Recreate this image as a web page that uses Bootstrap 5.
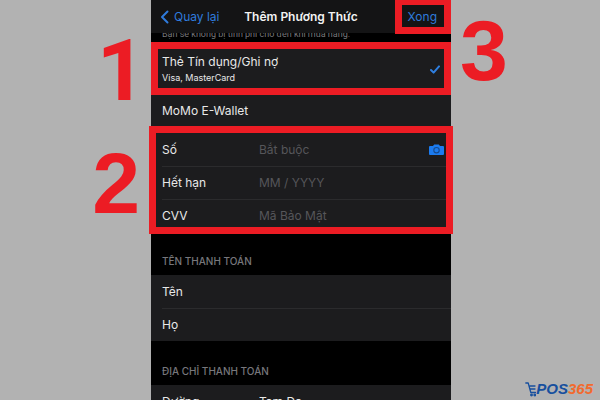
<!DOCTYPE html>
<html lang="vi">
<head>
<meta charset="utf-8">
<meta name="viewport" content="width=device-width, initial-scale=1">
<title>Thêm Phương Thức</title>
<link href="https://cdn.jsdelivr.net/npm/bootstrap@5.3.0/dist/css/bootstrap.min.css" rel="stylesheet">
<style>
body { background: #b2b2b2; font-family: Inter, "Noto Sans", sans-serif; font-size: 12px; line-height: 16px; color: #e8e8e8; }
.stage { display: grid; grid-template-columns: 151fr 300fr 149fr; grid-template-rows: 100vh; height: 100vh; }
.phone { background: #000; min-width: 0; }
.topbar { background: #141415; height: 33px; }
.topbar h1 { font-size: 12px; line-height: 16px; font-weight: 600; color: #f2f2f2; }
.side { flex: 1 1 0; }
.topbar a, .done { color: #2f7bdc; font-size: 12px; }
.topbar a { padding-left: 9px; gap: 4px; }
.done { margin-right: 14px; }
.notice { height: 9px; font: 9px/12px Roboto, "Noto Sans", sans-serif; color: #77777b; padding: 0 11px 2px; }
.cell { background: #1c1c1e; color: #e8e8e8; padding: 0 11px; min-height: 33px; }
.method { min-height: 53px; padding-top: 2px; }
.momo { height: 38px; padding-bottom: 7px; }
.method small { font-size: 9px; line-height: 16px; }
.cell + .cell > .line { border-top: 1px solid #2b2b2d; }
.line { height: 33px; margin-right: -11px; padding-right: 7px; }
.line label { flex: 0 0 97px; }
.line input { color: #e8e8e8; min-width: 0; padding: 0; line-height: 16px; height: 16px; }
.line input::placeholder { color: #56565a; opacity: 1; }
.caption { font-size: 10px; line-height: 14px; color: #77777c; padding: 0 11px 7px; }
.gap-a { height: 43px; }
.gap-b { height: 44px; }
.ring { position: absolute; border: 7px solid #ec1c24; pointer-events: none; z-index: 2; }
.ring-done { inset: 0 0 -1px auto; width: 56px; border-top-width: 5px; }
.ring-card { inset: -7px -2px -2px; }
.num { font: bold 86px/100px "Liberation Sans", Arial, sans-serif; color: #ec1c24; }
.num-one { font-family: Roboto, "Open Sans", sans-serif; }
.steps-l { padding: 21px 5px 0 0; }
.steps-l .num + .num { margin-top: 12px; padding-right: 6px; }
.steps-r { padding: 0 7px 2px 9px; }
.brand { font: italic bold 15px/18px "Liberation Sans", Arial, sans-serif; color: #174f9e; }
.brand b { color: #f26a2e; }
</style>
<script src="https://cdn.jsdelivr.net/npm/bootstrap@5.3.0/dist/js/bootstrap.bundle.min.js"></script>
</head>
<body class="overflow-hidden">
<div class="stage">
  <aside class="steps-l d-flex flex-column align-items-end">
    <div class="num num-one">1</div>
    <div class="num">2</div>
  </aside>

  <main class="phone">
    <header class="topbar position-relative d-flex align-items-center">
      <div class="side"><a href="#" class="d-flex align-items-center text-decoration-none">
        <svg width="10" height="14" viewBox="0 0 10 14" fill="none" stroke="currentColor" stroke-width="2" stroke-linecap="round" stroke-linejoin="round" aria-hidden="true"><path d="M7.500 1.500 2 7l5.500 5.500"/></svg>Quay lại</a></div>
      <h1 class="m-0 text-nowrap">Thêm Phương Thức</h1>
      <div class="side text-end"><button type="button" class="done btn border-0 p-0">Xong</button></div>
      <span class="ring ring-done"></span>
    </header>
    <p class="notice d-flex align-items-end overflow-hidden text-nowrap m-0">Bạn sẽ không bị tính phí cho đến khi mua hàng.</p>

    <button type="button" class="cell method position-relative border-0 w-100 d-flex align-items-center justify-content-between text-start">
      <span><span class="d-block">Thẻ Tín dụng/Ghi nợ</span><small class="d-block">Visa, MasterCard</small></span>
      <svg width="10" height="9" viewBox="0 0 10 9" fill="none" stroke="#2f7fe0" stroke-width="2" stroke-linecap="round" stroke-linejoin="round" aria-hidden="true"><path d="M1 5l2.600 2.600L9 1.400"/></svg>
      <span class="ring top-0 bottom-0 start-0 end-0"></span>
    </button>
    <button type="button" class="cell momo border-0 w-100 d-flex align-items-center">MoMo E-Wallet</button>

    <section class="position-relative">
      <div class="cell"><div class="line d-flex align-items-center">
        <label for="so">Số</label><input id="so" class="bg-transparent border-0 flex-grow-1" placeholder="Bắt buộc">
        <svg class="flex-shrink-0" width="15" height="12" viewBox="0 0 15 12" aria-hidden="true"><path fill="#1b7bf0" d="M1 2h3l1.200-1.600h4.600L11 2h3Q15 2 15 3v7Q15 11 14 11H1Q0 11 0 10V3Q0 2 1 2z"/><circle cx="7.500" cy="6.200" r="2.700" fill="none" stroke="#174a8c" stroke-width="1.100"/></svg>
      </div></div>
      <div class="cell"><div class="line d-flex align-items-center">
        <label for="han">Hết hạn</label><input id="han" class="bg-transparent border-0 flex-grow-1" placeholder="MM / YYYY"></div></div>
      <div class="cell"><div class="line d-flex align-items-center">
        <label for="cvv">CVV</label><input id="cvv" class="bg-transparent border-0 flex-grow-1" placeholder="Mã Bảo Mật"></div></div>
      <span class="ring ring-card"></span>
    </section>

    <h2 class="caption gap-a d-flex align-items-end m-0">TÊN THANH TOÁN</h2>
    <section>
      <div class="cell"><div class="line d-flex align-items-center">
        <label for="ten">Tên</label><input id="ten" class="bg-transparent border-0 flex-grow-1"></div></div>
      <div class="cell"><div class="line d-flex align-items-center">
        <label for="ho">Họ</label><input id="ho" class="bg-transparent border-0 flex-grow-1"></div></div>
    </section>
    <h2 class="caption gap-b d-flex align-items-end m-0">ĐỊA CHỈ THANH TOÁN</h2>
    <div class="cell"><div class="line d-flex align-items-center">
      <label for="duong">Đường</label><input id="duong" class="bg-transparent border-0 flex-grow-1" value="Tam Đa"></div></div>
  </main>

  <aside class="steps-r d-flex flex-column justify-content-between">
    <div class="num">3</div>
    <div class="brand d-flex align-items-center justify-content-end">
      <svg width="11" height="16" viewBox="0 0 11 16" fill="none" stroke="#174f9e" stroke-width="1.300" stroke-linecap="round" stroke-linejoin="round" aria-hidden="true"><path d="M.8 2h2.400l2.600 9.500H10.500M5 5h5M5.500 8h4.500"/><circle cx="6.500" cy="14" r=".8"/><circle cx="9.800" cy="14" r=".8"/></svg><span>POS<b>365</b></span>
    </div>
  </aside>
</div>
</body>
</html>
